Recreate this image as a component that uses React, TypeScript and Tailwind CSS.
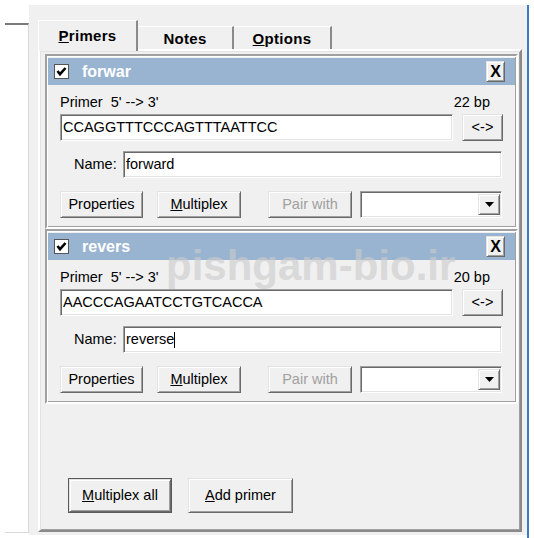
import React from "react";

const raised =
  "border border-t-[#e3e3e3] border-l-[#e3e3e3] border-r-[#696969] border-b-[#696969] shadow-[inset_1px_1px_0_#ffffff,inset_-1px_-1px_0_#a0a0a0] bg-[#f0f0f0]";
const sunken =
  "border border-t-[#a0a0a0] border-l-[#a0a0a0] border-r-white border-b-white shadow-[inset_1px_1px_0_#696969,inset_-1px_-1px_0_#e3e3e3] bg-white";

function Check() {
  return (
    <div className="w-[15px] h-[15px] bg-white border border-[#555] flex items-center justify-center">
      <svg width="11" height="11" viewBox="0 0 11 11">
        <polyline points="1.5,5 4,8.2 9.5,2" fill="none" stroke="#000" strokeWidth="2.6" />
      </svg>
    </div>
  );
}

function PrimerBlock({ title, bp, seq, name, caret }: { title: string; bp: string; seq: string; name: string; caret?: boolean }) {
  return (
    <div className="h-[175px] flex flex-col border-2 border-t-[#a0a0a0] border-l-[#a0a0a0] border-r-white border-b-white shadow-[inset_1px_1px_0_#ffffff,inset_-1px_-1px_0_#a0a0a0]">
      {/* Header bar */}
      <div className="mx-[1px] mt-[2px] h-[27px] bg-[#99b4d1] flex items-center pl-[6px] pr-[10px]">
        <Check />
        <span className="ml-[13px] text-[16px] font-bold text-white">{title}</span>
        <div className={`ml-auto w-[19px] h-[21px] flex items-center justify-center text-[16px] font-bold text-black ${raised}`}>X</div>
      </div>

      <div className="mt-[9px] h-[16px] leading-[16px] flex justify-between pl-[13px] pr-[26px]">
        <span>Primer&nbsp; 5' --&gt; 3'</span>
        <span>{bp}</span>
      </div>

      <div className="mt-[4px] h-[27px] flex pl-[13px]">
        <div className={`w-[393px] h-full flex items-center pl-[2px] ${sunken}`}>{seq}</div>
        <div className={`ml-[9px] w-[41px] h-full flex items-center justify-center ${raised}`}>&lt;-&gt;</div>
      </div>

      <div className="mt-[10px] h-[27px] flex items-center pl-[27px]">
        <span className="w-[49px]">Name:</span>
        <div className={`w-[379px] h-full flex items-center pl-[2px] ${sunken}`}>
          {name}
          {caret && <span className="w-[1px] h-[16px] bg-black" />}
        </div>
      </div>

      <div className="mt-[13px] h-[27px] flex pl-[13px]">
        <div className={`w-[83px] h-full flex items-center justify-center ${raised}`}>Properties</div>
        <div className={`ml-[14px] w-[84px] h-full flex items-center justify-center ${raised}`}>
          <span><span className="underline">M</span>ultiplex</span>
        </div>
        <div className={`ml-[27px] w-[84px] h-full flex items-center justify-center text-[#a0a0a0] ${raised}`}>Pair with</div>
        <div className={`ml-[8px] w-[142px] h-full flex items-center justify-end pr-[1px] ${sunken}`}>
          <div className={`w-[22px] h-[21px] flex items-center justify-center ${raised}`}>
            <svg width="9" height="5" viewBox="0 0 9 5">
              <polygon points="0,0 9,0 4.5,5" fill="#000" />
            </svg>
          </div>
        </div>
      </div>
    </div>
  );
}

export default function App() {
  return (
    <div className="relative w-[534px] h-[538px] bg-white flex overflow-hidden text-[14.5px] text-black font-['Liberation_Sans',Arial,sans-serif]">
      {/* Left pane */}
      <div className="w-[29px] shrink-0 pt-[23px] pl-[5px] pb-[5px]">
        <div className="h-full border-t-2 border-t-[#7a7a7a] border-r border-r-[#d9d9d9] border-b border-b-[#d9d9d9]" />
      </div>

      {/* Main gray area */}
      <div className="w-[498px] mt-[5px] mb-[3px] bg-[#f0f0f0] flex flex-col pl-[9px] pt-[15px] pb-[3px]">
        {/* Tabs */}
        <div className="relative z-10 flex items-end h-[31px] -mb-[2px]">
          <div className="w-[100px] h-[31px] bg-[#f0f0f0] border-t border-l border-white border-r-2 border-r-[#8a8a8a] flex justify-center pt-[6px] text-[15px] font-bold leading-[18px] tracking-[0.3px]">
            <span><span className="underline">P</span>rimers</span>
          </div>
          <div className="mb-[2px] w-[96px] h-[23px] border-t border-white border-r-2 border-r-[#8a8a8a] flex justify-center pt-[3px] text-[15px] font-bold leading-[18px] tracking-[0.3px]">
            Notes
          </div>
          <div className="mb-[2px] w-[98px] h-[23px] border-t border-white border-r-2 border-r-[#8a8a8a] flex justify-center pt-[3px] text-[15px] font-bold leading-[18px] tracking-[0.3px]">
            <span><span className="underline">O</span>ptions</span>
          </div>
        </div>

        {/* Tab panel */}
        <div className="w-[484px] flex-1 flex flex-col border-2 border-t-white border-l-white border-r-[#8a8a8a] border-b-[#8a8a8a] shadow-[inset_1px_1px_0_#e3e3e3,inset_-1px_-1px_0_#a0a0a0] pt-[3px] pl-[5px] pr-[2px] pb-[17px]">
          <PrimerBlock title="forwar" bp="22 bp" seq="CCAGGTTTCCCAGTTTAATTCC" name="forward" />
          <PrimerBlock title="revers" bp="20 bp" seq="AACCCAGAATCCTGTCACCA" name="reverse" caret />

          <div className="mt-auto flex pl-[23px] gap-[16px]">
            <div className="border border-[#5a5a5a]">
              <div className={`w-[102px] h-[33px] flex items-center justify-center ${raised}`}>
                <span><span className="underline">M</span>ultiplex all</span>
              </div>
            </div>
            <div className={`w-[105px] h-[35px] flex items-center justify-center ${raised}`}>
              <span><span className="underline">A</span>dd primer</span>
            </div>
          </div>
        </div>
      </div>

      {/* Right edge */}
      <div className="w-[2px] mt-[5px] bg-[#3b7bbf]" />
      <div className="w-[5px]" />

      {/* Watermark */}
      <div className="pointer-events-none absolute left-[166px] top-[245px] text-[42px] leading-none font-bold text-[#cbcbcb] opacity-[0.62]">
        pishgam-bio.ir
      </div>
    </div>
  );
}
